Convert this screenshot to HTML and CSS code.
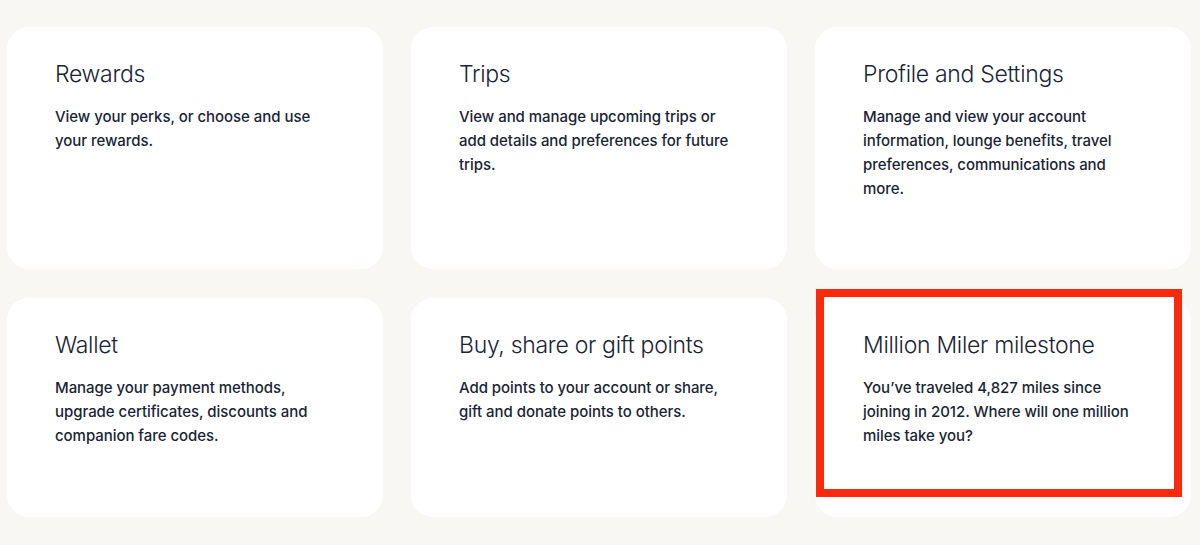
FILE: index.html
```html
<!DOCTYPE html>
<html lang="en">
<head>
<meta charset="utf-8">
<title>Account</title>
<link rel="stylesheet" href="styles.css">
</head>
<body>
<main class="grid">
  <section class="card row1">
    <h2 class="title">Rewards</h2>
    <p class="desc">View your perks, or choose and use your rewards.</p>
  </section>
  <section class="card row1">
    <h2 class="title">Trips</h2>
    <p class="desc">View and manage upcoming trips or add details and preferences for future trips.</p>
  </section>
  <section class="card row1">
    <h2 class="title">Profile and Settings</h2>
    <p class="desc">Manage and view your account information, lounge benefits, travel preferences, communications and more.</p>
  </section>
  <section class="card row2">
    <h2 class="title">Wallet</h2>
    <p class="desc">Manage your payment methods, upgrade certificates, discounts and companion fare codes.</p>
  </section>
  <section class="card row2">
    <h2 class="title">Buy, share or gift points</h2>
    <p class="desc">Add points to your account or share, gift and donate points to others.</p>
  </section>
  <section class="card row2 highlighted">
    <h2 class="title">Million Miler milestone</h2>
    <p class="desc">You’ve traveled 4,827 miles since joining in 2012. Where will one million miles take you?</p>
    <div class="highlight-box"></div>
  </section>
</main>
</body>
</html>
```
FILE: styles.css
```css
html, body {
  margin: 0;
  padding: 0;
  background: #f8f7f3;
}
body {
  font-family: "Inter", "Liberation Sans", sans-serif;
  color: #1b2435;
  width: 1200px;
  height: 545px;
  overflow: hidden;
}
.grid {
  display: grid;
  grid-template-columns: 376px 376px 376px;
  grid-template-rows: 242px 219px;
  column-gap: 28px;
  row-gap: 29px;
  padding: 27px 0 0 7px;
}
.card {
  background: #ffffff;
  border-radius: 22px;
  padding: 31px 40px 0 48px;
  box-sizing: border-box;
  position: relative;
}
.title {
  margin: 0;
  font-size: 23px;
  font-weight: 300;
  line-height: 32px;
  letter-spacing: -0.3px;
}
.desc {
  margin: 15px 0 0;
  font-size: 15px;
  font-weight: 500;
  line-height: 24px;
  letter-spacing: -0.05px;
  max-width: 276px;
}
.highlight-box {
  position: absolute;
  left: 1px;
  top: -9px;
  width: 366px;
  height: 208px;
  border: 8px solid #fb2a0c;
  box-sizing: border-box;
  pointer-events: none;
}
```
